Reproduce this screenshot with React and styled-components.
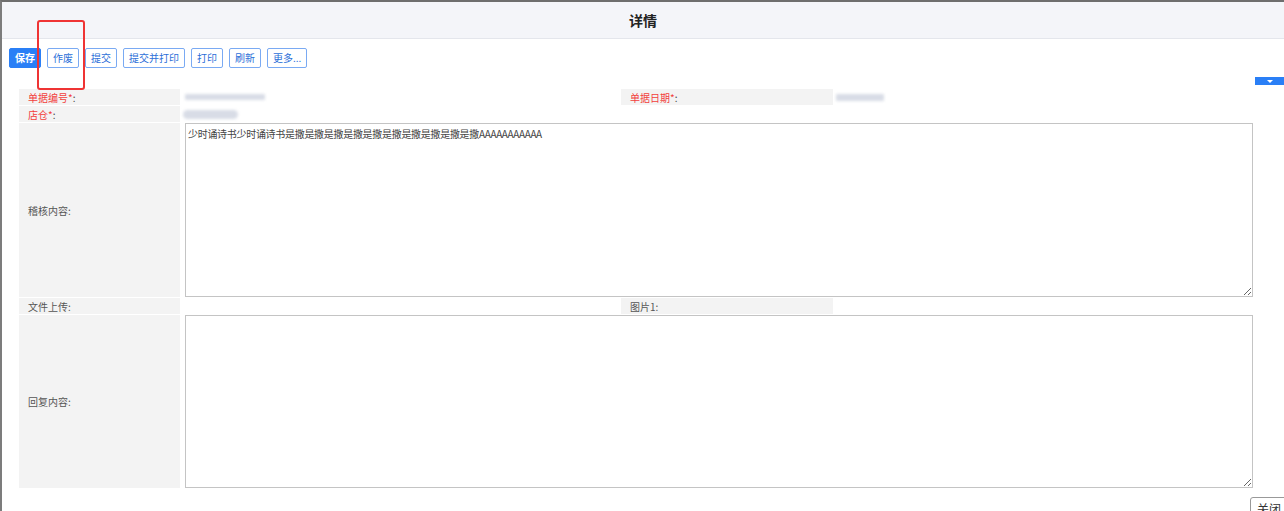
import styled, { createGlobalStyle } from 'styled-components';

const GlobalStyle = createGlobalStyle`
  html, body {
    margin: 0;
    padding: 0;
    background: #ffffff;
  }
  body {
    font-family: "Noto Sans CJK SC", "Liberation Sans", sans-serif;
    color: #333;
  }
`;

const Frame = styled.div`
  position: relative;
  width: 1284px;
  height: 511px;
  box-sizing: border-box;
  border-top: 2px solid #6e6e6e;
  border-left: 2px solid #7c7c7c;
  overflow: hidden;
  background: #fff;
`;

const Header = styled.div`
  height: 36px;
  background: #f4f5f9;
  border-bottom: 1px solid #e4e6ec;
  display: flex;
  align-items: center;
  justify-content: center;
  font-size: 14px;
  font-weight: bold;
  color: #222;
`;

const Toolbar = styled.div`
  display: flex;
  gap: 6px;
  padding: 9px 0 0 7px;
`;

const Button = styled.button`
  height: 20px;
  padding: 0 5px;
  box-sizing: border-box;
  font-family: inherit;
  font-size: 10px;
  line-height: 18px;
  border-radius: 2px;
  border: 1px solid ${p => (p.$primary ? '#2a7ff6' : '#7aaaf3')};
  background: ${p => (p.$primary ? '#2a7ff6' : '#fff')};
  color: ${p => (p.$primary ? '#fff' : '#2c6fd8')};
  font-weight: ${p => (p.$primary ? 'bold' : 'normal')};
`;

const DropRow = styled.div`
  display: flex;
  justify-content: flex-end;
  margin-top: 9px;
`;

const DropButton = styled.div`
  width: 30px;
  height: 8px;
  background: #2a7ff6;
  display: flex;
  align-items: center;
  justify-content: center;
  margin-right: -1px;

  &::after {
    content: '';
    border-left: 3px solid transparent;
    border-right: 3px solid transparent;
    border-top: 3px solid #fff;
  }
`;

const Form = styled.div`
  display: grid;
  grid-template-columns: 161px 441px 212px 420px;
  grid-template-rows: 16px 16px 174px 16px 173px;
  row-gap: 1px;
  margin: 4px 0 0 17px;
  width: 1234px;
`;

const Label = styled.div`
  background: #f3f3f3;
  padding-left: 9px;
  display: flex;
  align-items: center;
  font-size: 10px;
  color: ${p => (p.$required ? '#f2403c' : '#555')};
  white-space: nowrap;
`;

const Colon = styled.span`
  color: #444;
`;

const Value = styled.div`
  display: flex;
  align-items: center;
  padding-left: ${p => p.$indent || 0}px;
`;

const Blur = styled.div`
  width: ${p => p.$w}px;
  height: ${p => p.$h}px;
  background: #d8dce6;
  border-radius: ${p => (p.$round ? '5px' : '1px')};
  filter: blur(1.5px);
`;

const AreaCell = styled.div`
  grid-column: 2 / -1;
  padding-left: 5px;
  display: flex;
`;

const TextArea = styled.textarea`
  flex: 1;
  box-sizing: border-box;
  height: 100%;
  margin: 0;
  padding: 3px 2px;
  border: 1px solid #c4c4c4;
  font-family: "Noto Sans CJK SC", "Liberation Sans", sans-serif;
  font-size: 10px;
  line-height: 14px;
  letter-spacing: -0.3px;
  color: #444;
  resize: both;
  outline: none;
`;

const Footer = styled.div`
  display: flex;
  justify-content: flex-end;
  margin-top: 9px;
`;

const CloseButton = styled.button`
  width: 40px;
  height: 22px;
  margin-right: -6px;
  box-sizing: border-box;
  border: 1px solid #999;
  border-radius: 3px;
  background: #fff;
  font-family: inherit;
  font-size: 12px;
  color: #333;
  text-align: left;
  padding: 1px 0 0 6px;
  line-height: 18px;
`;

const Marker = styled.div`
  position: absolute;
  left: 35px;
  top: 18px;
  width: 48px;
  height: 70px;
  border: 2px solid #ef3434;
  border-radius: 3px;
  box-sizing: border-box;
  pointer-events: none;
`;

const buttons = ['作废', '提交', '提交并打印', '打印', '刷新', '更多...'];

export default function App() {
  return (
    <>
      <GlobalStyle />
      <Frame>
        <Header>详情</Header>
        <Toolbar>
          <Button $primary>保存</Button>
          {buttons.map(b => (
            <Button key={b}>{b}</Button>
          ))}
        </Toolbar>
        <DropRow>
          <DropButton />
        </DropRow>
        <Form>
          <Label $required>单据编号*<Colon>:</Colon></Label>
          <Value $indent={5}>
            <Blur $w={80} $h={6} />
          </Value>
          <Label $required>单据日期*<Colon>:</Colon></Label>
          <Value $indent={3}>
            <Blur $w={48} $h={7} />
          </Value>

          <Label $required>店仓*<Colon>:</Colon></Label>
          <Value $indent={3} style={{ gridColumn: '2 / -1' }}>
            <Blur $w={55} $h={9} $round />
          </Value>

          <Label>稽核内容:</Label>
          <AreaCell>
            <TextArea defaultValue="少时诵诗书少时诵诗书是撒是撒是撒是撒是撒是撒是撒是撒是撒是撒AAAAAAAAAAA" />
          </AreaCell>

          <Label>文件上传:</Label>
          <Value />
          <Label>图片1:</Label>
          <Value />

          <Label>回复内容:</Label>
          <AreaCell>
            <TextArea />
          </AreaCell>
        </Form>
        <Footer>
          <CloseButton>关闭</CloseButton>
        </Footer>
        <Marker />
      </Frame>
    </>
  );
}
